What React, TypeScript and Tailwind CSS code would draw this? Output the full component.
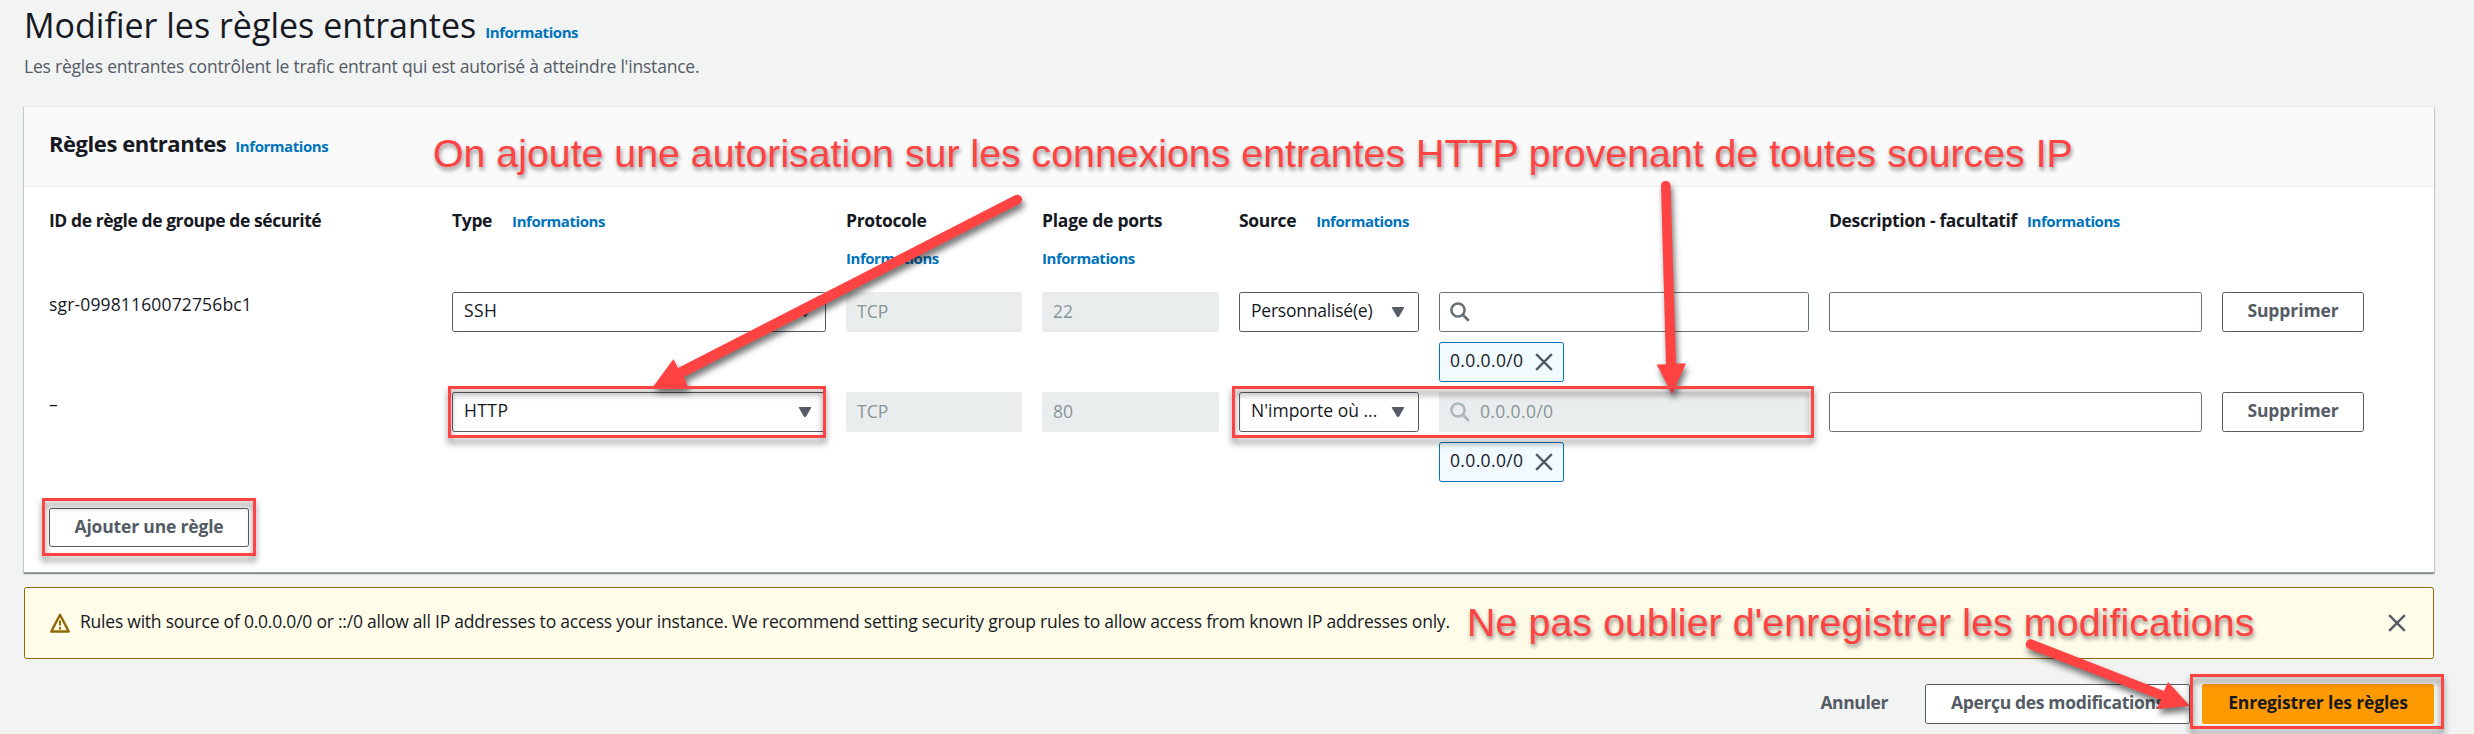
import React from "react";

function Info({ className = "leading-none" }: { className?: string }) {
  return (
    <a className={`whitespace-nowrap text-[15px] font-bold tracking-[-0.45px] text-[#0073bb] ${className}`}>
      Informations
    </a>
  );
}

function Label({ text, className = "tracking-[-0.35px]" }: { text: string; className?: string }) {
  return <span className={`whitespace-nowrap font-bold ${className}`}>{text}</span>;
}

function Caret() {
  return (
    <svg width="14" height="12" viewBox="0 0 14 12" className="shrink-0">
      <path d="M1.2 1.5h11.600L7.600 10.600H6.400z" fill="#545b64" stroke="#545b64" strokeLinejoin="round" />
    </svg>
  );
}

function Cross() {
  return (
    <svg width="18" height="18" viewBox="0 0 18 18" className="shrink-0">
      <path d="M1.2 1.2l15.6 15.6M16.8 1.2L1.2 16.8" stroke="#545b64" strokeWidth="2.4" fill="none" />
    </svg>
  );
}

function Search({ color }: { color: string }) {
  return (
    <svg width="20" height="20" viewBox="0 0 20 20" className="shrink-0">
      <circle cx="8" cy="8" r="6.6" stroke={color} strokeWidth="2.5" fill="none" />
      <path d="M12.5 12.5l6.300 6.300" stroke={color} strokeWidth="2.7" />
    </svg>
  );
}

function Select({ text, className = "" }: { text: string; className?: string }) {
  return (
    <div className="flex h-10 items-center justify-between rounded-[2.5px] border border-[#545b64] bg-white pl-[11px] pr-[13px]">
      <span className={`whitespace-nowrap pb-[3px] ${className}`}>{text}</span>
      <Caret />
    </div>
  );
}

function Disabled({ text }: { text: string }) {
  return (
    <div className="flex h-10 items-center rounded-[2.5px] bg-[#eaeded] pb-[2px] pl-[11px] text-[#879596]">{text}</div>
  );
}

function Button({ text, className = "" }: { text: string; className?: string }) {
  return (
    <button className={`flex items-center justify-center whitespace-nowrap rounded-[2.5px] border border-[#545b64] bg-white pb-[3px] font-bold text-[#545b64] ${className}`}>
      {text}
    </button>
  );
}

function Token() {
  return (
    <div className="mt-2.5 flex h-10 w-[125px] items-center justify-between rounded-[2.5px] border border-[#0073bb] bg-[#f1faff] px-2.5">
      <span className="pb-[3px] tracking-[0.35px]">0.0.0.0/0</span>
      <Cross />
    </div>
  );
}

const GRID = "grid grid-cols-[383px_374px_176px_177px_180px_370px_373px_142px] gap-x-5 pl-[25px]";

type Rule = { id: string; type: string; port: string; source: string; sourceClass: string; locked: boolean };

const rules: Rule[] = [
  { id: "sgr-09981160072756bc1", type: "SSH", port: "22", source: "Personnalisé(e)", sourceClass: "tracking-[-0.22px]", locked: false },
  { id: "–", type: "HTTP", port: "80", source: "N'importe où ...", sourceClass: "", locked: true },
];

function RuleRow({ rule }: { rule: Rule }) {
  return (
    <div className={`${GRID} h-[100px]`}>
      <div className="-mt-px tracking-[0.15px]">{rule.id}</div>
      <Select text={rule.type} className="tracking-[0.4px]" />
      <Disabled text="TCP" />
      <Disabled text={rule.port} />
      <Select text={rule.source} className={rule.sourceClass} />
      <div>
        {rule.locked ? (
          <div className="flex h-10 items-center gap-2.5 rounded-[2.5px] bg-[#eaeded] pl-[11px] text-[#879596]">
            <Search color="#aab7b8" />
            <span className="pb-[2px] tracking-[0.35px]">0.0.0.0/0</span>
          </div>
        ) : (
          <div className="flex h-10 items-center rounded-[2.5px] border border-[#687078] bg-white pl-2.5">
            <Search color="#687078" />
          </div>
        )}
        <Token />
      </div>
      <div className="h-10 rounded-[2.5px] border border-[#687078] bg-white" />
      <Button text="Supprimer" className="h-10 tracking-[-0.1px]" />
    </div>
  );
}

const NOTE =
  "absolute whitespace-nowrap font-['Liberation_Sans',sans-serif] text-[39.3px] leading-[44px] text-[#ff4242] [text-shadow:1px_3px_4px_rgba(0,0,0,0.45)]";
const BOX = "absolute border-[3px] border-[#ff4242] [filter:drop-shadow(0_5px_3px_rgba(0,0,0,0.5))]";

export default function App() {
  return (
    <div className="relative flex h-[734px] w-[2474px] flex-col overflow-hidden bg-[#f2f3f3] pl-6 font-['Open_Sans','Noto_Sans',sans-serif] text-[17.5px] leading-[27px] text-[#16191f]">
      <header className="h-[106px] shrink-0 pt-[2px]">
        <div className="flex items-baseline gap-[9px]">
          <h1 className="whitespace-nowrap text-[34px] leading-[46px]">Modifier les règles entrantes</h1>
          <Info />
        </div>
        <p className="mt-[5px] whitespace-nowrap tracking-[-0.21px] text-[#545b64]">
          Les règles entrantes contrôlent le trafic entrant qui est autorisé à atteindre l'instance.
        </p>
      </header>

      <section className="h-[467px] w-[2410px] shrink-0 border-b border-t border-b-[#959fa2] border-t-[#eaeded] bg-white shadow-[0_1px_1px_0_rgba(0,28,36,0.25),1px_1px_1px_0_rgba(0,28,36,0.15),-1px_1px_1px_0_rgba(0,28,36,0.15)]">
        <div className="flex h-20 items-center border-b border-[#eaeded] bg-[#fafafa] pb-[6px] pl-[25px]">
          <div className="flex items-baseline gap-[9px]">
            <h2 className="whitespace-nowrap text-[22px] font-bold tracking-[-0.45px]">Règles entrantes</h2>
            <Info />
          </div>
        </div>
        <div className={`${GRID} h-[105px] pt-[14px] leading-[38px]`}>
          <Label text="ID de règle de groupe de sécurité" className="tracking-[-0.43px]" />
          <div className="flex items-baseline gap-5"><Label text="Type" /><Info /></div>
          <div className="flex flex-col"><Label text="Protocole" /><Info className="leading-[38px]" /></div>
          <div className="flex flex-col"><Label text="Plage de ports" className="tracking-[-0.25px]" /><Info className="leading-[38px]" /></div>
          <div className="flex items-baseline gap-5"><Label text="Source" /><Info /></div>
          <div />
          <div className="flex items-baseline gap-2.5"><Label text="Description - facultatif" /><Info /></div>
          <div />
        </div>
        {rules.map((r) => (
          <RuleRow key={r.id} rule={r} />
        ))}
        <div className="pl-[25px] pt-4">
          <Button text="Ajouter une règle" className="h-[39px] w-[200px] tracking-[-0.17px]" />
        </div>
      </section>

      <section className="mt-3.5 flex h-[72px] w-[2410px] shrink-0 items-center rounded-[2.5px] border border-[#906806] bg-[#fffce9] pl-[25px] pr-[27px]">
        <svg width="20" height="20" viewBox="0 0 20 20" className="shrink-0">
          <path d="M10 1.800L18.700 18.500H1.300z" fill="none" stroke="#906806" strokeWidth="2.4" strokeLinejoin="round" />
          <path d="M10 7.500v5M10 14v2.400" stroke="#906806" strokeWidth="2" />
        </svg>
        <p className="ml-2.5 grow whitespace-nowrap pb-[3px] tracking-[-0.225px]">
          Rules with source of 0.0.0.0/0 or ::/0 allow all IP addresses to access your instance. We recommend setting security group rules to allow access from known IP addresses only.
        </p>
        <Cross />
      </section>

      <footer className="mt-[25px] flex w-[2410px] items-center justify-end">
        <span className="mr-[37px] pb-[3px] font-bold tracking-[-0.37px] text-[#545b64]">Annuler</span>
        <Button text="Aperçu des modifications" className="mr-3 h-10 w-[265px] tracking-[-0.35px]" />
        <button className="h-10 w-[232px] whitespace-nowrap rounded-[2.5px] bg-[#ff9900] pb-[3px] font-bold tracking-[-0.17px]">
          Enregistrer les règles
        </button>
      </footer>

      <div className={`${NOTE} left-[433px] top-[131px]`}>
        On ajoute une autorisation sur les connexions entrantes HTTP provenant de toutes sources IP
      </div>
      <div className={`${NOTE} left-[1467px] top-[600px] tracking-[0.1px]`}>Ne pas oublier d'enregistrer les modifications</div>

      <svg
        className="absolute left-0 top-0 [filter:drop-shadow(2px_5px_3px_rgba(0,0,0,0.55))]"
        width="2474"
        height="734"
        viewBox="0 0 2474 734"
      >
        <g fill="#ff4242">
          <path d="M1014.500 195.500A4.800 4.800 0 0 1 1020 203.500L684 377L688 387L652.500 387.500L673.500 359L678 368Z" />
          <path d="M1661 185A4.800 4.800 0 0 1 1670.500 185L1676 363.500H1686L1672 394L1656.700 364.500L1666 364.300Z" />
          <path d="M2028 648.500A5 5 0 0 1 2032 639.500L2164 691L2168 682L2190 706L2157 709L2161 700Z" />
        </g>
      </svg>
      <div className={`${BOX} left-[42px] top-[498px] h-[58px] w-[214px]`} />
      <div className={`${BOX} left-[448px] top-[386px] h-[52px] w-[378px]`} />
      <div className={`${BOX} left-[1232px] top-[386px] h-[52px] w-[582px]`} />
      <div className={`${BOX} left-[2190px] top-[674px] h-[55px] w-[254px]`} />
    </div>
  );
}
